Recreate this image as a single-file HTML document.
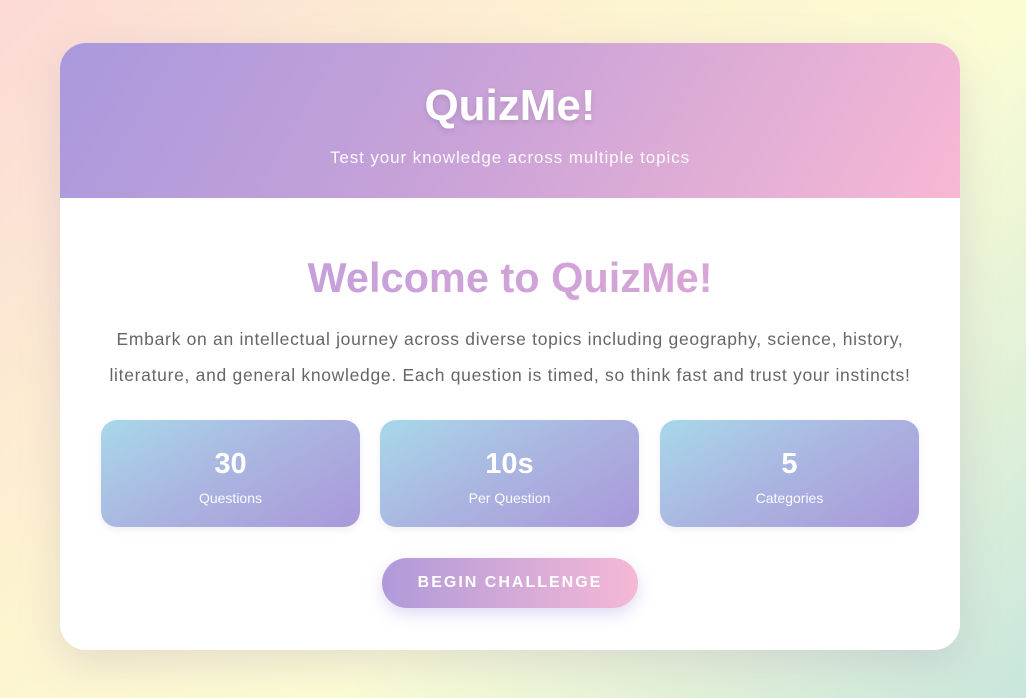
<!DOCTYPE html>
<html><head><meta charset="utf-8"><style>
*{margin:0;padding:0;box-sizing:border-box}
body{width:1026px;height:698px;overflow:hidden;font-family:"Liberation Sans",sans-serif;
background:linear-gradient(135deg,#fcd9d6 0%,#fdf3d0 35%,#fbfcd4 60%,#c8e6dc 100%);position:relative}
.card{position:absolute;left:60px;top:43px;width:900px;height:607px;background:#fff;border-radius:26px;overflow:hidden;box-shadow:0 12px 40px rgba(160,140,180,.25)}
.hd{height:155px;background:linear-gradient(120deg,#a999dd 0%,#c8a2d8 45%,#f8b8d4 100%);text-align:center;color:#fff}
.hd h1{font-size:44px;font-weight:bold;padding-top:38px;line-height:50px;text-shadow:0 2px 6px rgba(0,0,0,.12)}
.hd p{font-size:17px;margin-top:17px;opacity:.95;letter-spacing:.9px}
h2{text-align:center;font-size:41.5px;font-weight:bold;margin-top:57px;line-height:46px;
background:linear-gradient(90deg,#b99ddc,#e5a8d4);-webkit-background-clip:text;color:transparent}
.txt{text-align:center;color:#666;font-size:17.5px;line-height:36px;margin-top:20px;letter-spacing:.7px;white-space:nowrap}
.stat{position:absolute;top:377px;width:259px;height:107px;border-radius:16px;background:linear-gradient(150deg,#a8d8ea 0%,#aab4e0 50%,#aa98da 100%);color:#fff;text-align:center;box-shadow:0 3px 8px rgba(150,150,200,.15)}
.stat b{display:block;font-size:29px;margin-top:28px;line-height:32px}
.stat span{display:block;font-size:14px;margin-top:10px;opacity:.95}
.btn{position:absolute;left:322px;top:515px;width:256px;height:50px;border-radius:25px;background:linear-gradient(90deg,#af9ad9,#f6b8d6);color:#fff;font-weight:bold;font-size:16px;letter-spacing:2px;text-align:center;line-height:50px;box-shadow:0 6px 16px rgba(170,150,220,.35)}
</style></head><body>
<div class="card">
<div class="hd"><h1>QuizMe!</h1><p>Test your knowledge across multiple topics</p></div>
<h2>Welcome to QuizMe!</h2>
<div class="txt">Embark on an intellectual journey across diverse topics including geography, science, history,<br>literature, and general knowledge. Each question is timed, so think fast and trust your instincts!</div>
<div class="stat" style="left:41px"><b>30</b><span>Questions</span></div>
<div class="stat" style="left:320px"><b>10s</b><span>Per Question</span></div>
<div class="stat" style="left:600px"><b>5</b><span>Categories</span></div>
<div class="btn">BEGIN CHALLENGE</div>
</div>
</body></html>
